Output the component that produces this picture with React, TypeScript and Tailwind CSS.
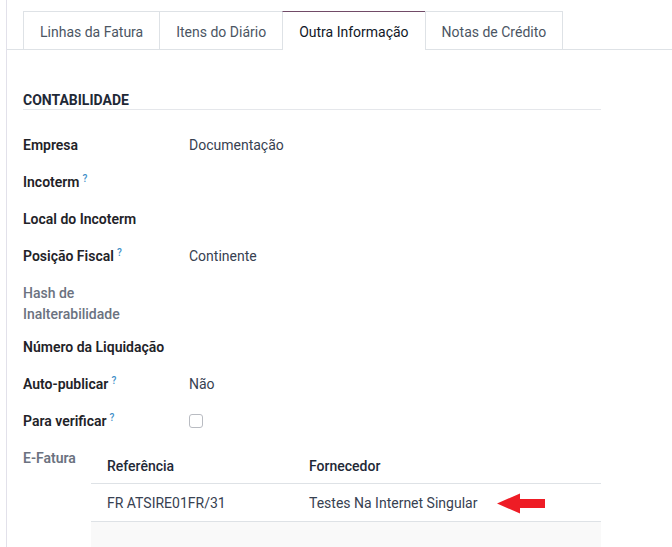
import type { ReactNode } from 'react'

const tabs = ['Linhas da Fatura', 'Itens do Diário', 'Outra Informação', 'Notas de Crédito']

export default function App() {
  return (
    <div className="min-h-screen bg-white font-['Roboto',sans-serif] text-[14px] text-[#212529]">
      <div className="ml-[6px] min-h-[547px] border-l border-[#e2e1ea] pt-[11px]">
        <div className="flex items-start border-b border-[#dee2e6] pl-4">
          {tabs.map((t, i) => (
            <Tab key={t} label={t} active={i === 2} first={i === 0} />
          ))}
        </div>

        <div className="pl-4 pr-[71px]">
          <h2 className="mt-[41px] border-b border-[#e5e7eb] text-[14px] font-bold uppercase leading-[18px] text-[#1f2937]">
            Contabilidade
          </h2>

          <div className="mt-4">
            <Field label="Empresa" value="Documentação" />
            <Field label="Incoterm" help />
            <Field label="Local do Incoterm" />
            <Field label="Posição Fiscal" help value="Continente" />
            <div className="flex pt-[9px] pb-[3px]">
              <div className="w-[166px] shrink-0 pr-4 leading-[21px] font-medium text-[#6b7280]">
                Hash de
                <br />
                Inalterabilidade
              </div>
            </div>
            <Field label="Número da Liquidação" />
            <Field label="Auto-publicar" help value="Não" />
            <Field
              label="Para verificar"
              help
              value={<span className="mt-[3px] block h-[14px] w-[14px] rounded-[3px] border border-[#b9bcc2]" />}
            />

            <div className="flex pt-[9px]">
              <div className="w-[68px] shrink-0 leading-[21px] font-semibold text-[#6b7280]">E-Fatura</div>
              <div className="-mt-px flex-1">
                <div className="flex border-b border-[#dee2e6] font-medium leading-[20px] text-[#1f2937]">
                  <div className="w-[202px] px-4 pt-[9px] pb-[7px]">Referência</div>
                  <div className="flex-1 px-4 pt-[9px] pb-[7px]">Fornecedor</div>
                </div>
                <div className="flex border-b border-[#dee2e6] leading-[21px] text-[#374151]">
                  <div className="w-[202px] px-4 pt-[9px] pb-[7px]">FR ATSIRE01FR/31</div>
                  <div className="flex flex-1 items-center px-4 pt-[9px] pb-[7px]">
                    Testes Na Internet Singular
                    <Arrow />
                  </div>
                </div>
                <div className="h-[30px] bg-[#f9f9f9]" />
              </div>
            </div>
          </div>
        </div>
      </div>
    </div>
  )
}

function Tab({ label, active, first }: { label: string; active: boolean; first: boolean }) {
  if (active) {
    return (
      <div className="-mb-px -ml-px flex h-[39px] items-center border-x border-t border-[#dee2e6] border-t-[#714b67] bg-white px-4 pt-[3px] text-[#111827]">
        {label}
      </div>
    )
  }
  return (
    <div
      className={`flex h-[38px] items-center border-x border-t border-[#dee2e6] px-4 pt-[3px] text-[#4b5563] ${first ? '' : '-ml-px'}`}
    >
      {label}
    </div>
  )
}

function Field({ label, help, value }: { label: string; help?: boolean; value?: ReactNode }) {
  return (
    <div className="flex pt-[9px] pb-[7px] leading-[21px]">
      <div className="w-[166px] shrink-0 pr-4 font-semibold text-[#1f2328]">
        {label}
        {help && <sup className="ml-[3px] text-[10px] font-medium text-[#3f8fc7]">?</sup>}
      </div>
      <div className="text-[#374151]">{value}</div>
    </div>
  )
}

function Arrow() {
  return (
    <svg width="48" height="21" viewBox="0 0 48 21" className="ml-5">
      <polygon points="0,10.5 23,0.5 23,6 48,6 48,15 23,15 23,20.5" fill="#ee1c25" />
    </svg>
  )
}
